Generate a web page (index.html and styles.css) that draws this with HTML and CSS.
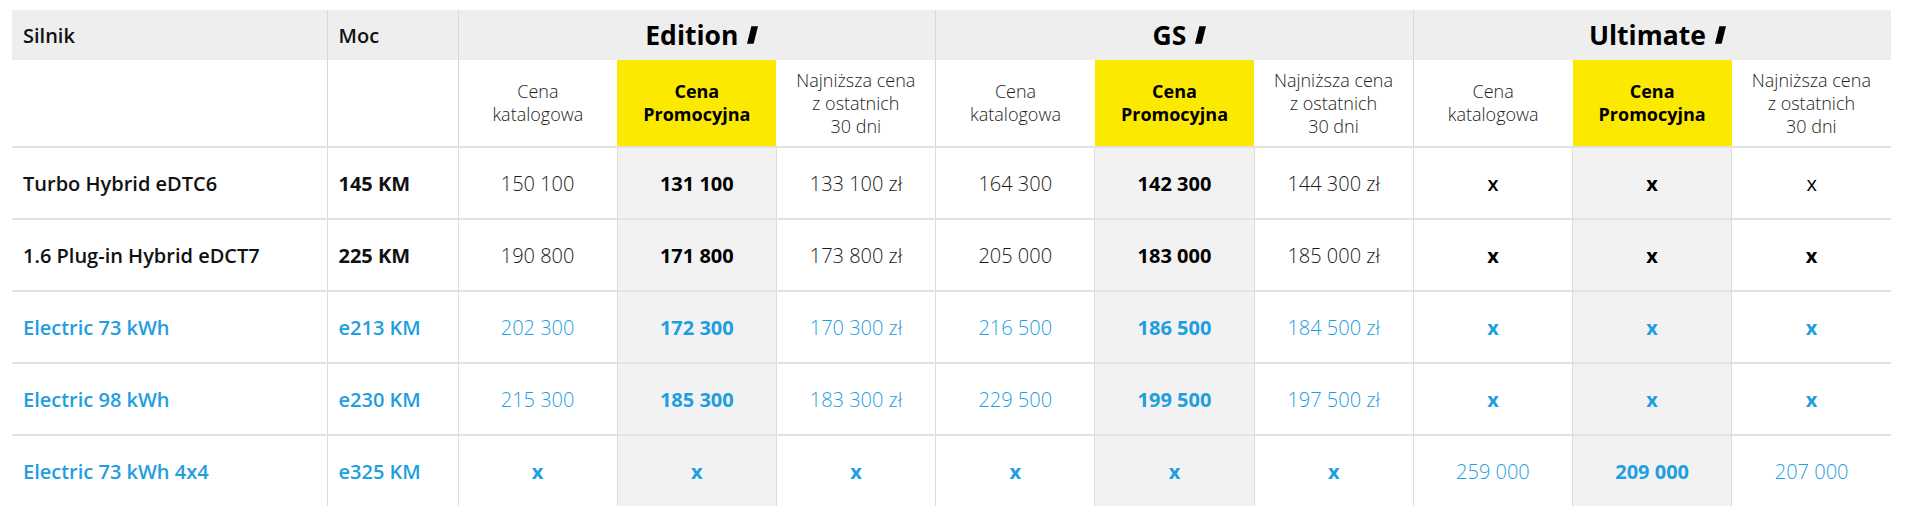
FILE: index.html
```html
<!DOCTYPE html>
<html lang="pl">
<head>
<meta charset="utf-8">
<title>Cennik</title>
<link rel="stylesheet" href="styles.css">
</head>
<body>
<table class="price-table">
  <colgroup>
    <col class="c-engine"><col class="c-power">
    <col><col><col><col><col><col><col><col><col>
  </colgroup>
  <thead>
    <tr class="head">
      <th class="lbl">Silnik</th>
      <th class="lbl">Moc</th>
      <th class="grp" colspan="3"><span class="grp-name">Edition<svg class="slash" viewBox="0 0 10 16"><polygon points="4,0 10,0 6,16 0,16"/></svg></span></th>
      <th class="grp" colspan="3"><span class="grp-name">GS<svg class="slash" viewBox="0 0 10 16"><polygon points="4,0 10,0 6,16 0,16"/></svg></span></th>
      <th class="grp" colspan="3"><span class="grp-name">Ultimate<svg class="slash" viewBox="0 0 10 16"><polygon points="4,0 10,0 6,16 0,16"/></svg></span></th>
    </tr>
    <tr class="sub">
      <th class="sep"></th>
      <th class="sep"></th>
      <th class="sep">Cena<br>katalogowa</th>
      <th class="promo">Cena<br>Promocyjna</th>
      <th>Najniższa cena<br>z ostatnich<br>30 dni</th>
      <th class="sep">Cena<br>katalogowa</th>
      <th class="promo">Cena<br>Promocyjna</th>
      <th>Najniższa cena<br>z ostatnich<br>30 dni</th>
      <th class="sep">Cena<br>katalogowa</th>
      <th class="promo">Cena<br>Promocyjna</th>
      <th>Najniższa cena<br>z ostatnich<br>30 dni</th>
    </tr>
  </thead>
  <tbody>
    <tr>
      <td class="name">Turbo Hybrid eDTC6</td>
      <td class="power">145 KM</td>
      <td>150 100</td><td class="pr">131 100</td><td>133 100 zł</td>
      <td>164 300</td><td class="pr">142 300</td><td>144 300 zł</td>
      <td class="x x-m">x</td><td class="pr x">x</td><td class="x x-r">x</td>
    </tr>
    <tr>
      <td class="name">1.6 Plug-in Hybrid eDCT7</td>
      <td class="power">225 KM</td>
      <td>190 800</td><td class="pr">171 800</td><td>173 800 zł</td>
      <td>205 000</td><td class="pr">183 000</td><td>185 000 zł</td>
      <td class="x">x</td><td class="pr x">x</td><td class="x">x</td>
    </tr>
    <tr class="ev">
      <td class="name">Electric 73 kWh</td>
      <td class="power">e213 KM</td>
      <td>202 300</td><td class="pr">172 300</td><td>170 300 zł</td>
      <td>216 500</td><td class="pr">186 500</td><td>184 500 zł</td>
      <td class="x">x</td><td class="pr x">x</td><td class="x">x</td>
    </tr>
    <tr class="ev">
      <td class="name">Electric 98 kWh</td>
      <td class="power">e230 KM</td>
      <td>215 300</td><td class="pr">185 300</td><td>183 300 zł</td>
      <td>229 500</td><td class="pr">199 500</td><td>197 500 zł</td>
      <td class="x">x</td><td class="pr x">x</td><td class="x">x</td>
    </tr>
    <tr class="ev">
      <td class="name">Electric 73 kWh 4x4</td>
      <td class="power">e325 KM</td>
      <td class="x">x</td><td class="pr x">x</td><td class="x">x</td>
      <td class="x">x</td><td class="pr x">x</td><td class="x">x</td>
      <td>259 000</td><td class="pr">209 000</td><td>207 000</td>
    </tr>
  </tbody>
</table>
</body>
</html>
```

FILE: styles.css
```css
html, body {
  margin: 0;
  padding: 0;
  background: #ffffff;
}

body {
  padding: 10px 16px 0 12px;
  font-family: "Open Sans", "Noto Sans", sans-serif;
  color: #111111;
}

.price-table {
  width: 1879px;
  border-collapse: collapse;
  table-layout: fixed;
}

.c-engine { width: 315px; }
.c-power { width: 131px; }

/* header row */
.head th {
  height: 50px;
  background: #eeeeee;
  padding: 0;
  border-left: 1px solid #d9d9d9;
}
.head th:first-child { border-left: none; }

.head .lbl {
  text-align: left;
  padding-left: 11px;
  font-size: 20px;
  font-weight: 600;
  color: #111;
}

.head .grp {
  text-align: center;
  font-size: 26.5px;
  font-weight: 700;
  color: #000;
}

.grp-name {
  display: inline-flex;
  align-items: center;
  gap: 9px;
  padding-left: 10px;
}

.slash {
  width: 11px;
  height: 18px;
  fill: #000;
}

/* sub header */
.sub th {
  height: 86px;
  padding: 0 2px;
  font-size: 18px;
  font-weight: 300;
  line-height: 23px;
  color: #222;
  text-align: center;
  vertical-align: middle;
  border-bottom: 2px solid #e2e2e2;
}
.sub th.sep { border-left: 1px solid #d9d9d9; }
.sub th:first-child { border-left: none; }

.sub th.promo {
  background: #fce900;
  font-weight: 700;
  color: #000;
}

/* body */
tbody td {
  height: 70px;
  padding: 0;
  text-align: center;
  vertical-align: middle;
  font-size: 20px;
  font-weight: 300;
  color: #1a1a1a;
  border-left: 1px solid #dcdcdc;
  border-top: 2px solid #e2e2e2;
}
tbody tr:first-child td { border-top: none; }
tbody td:first-child { border-left: none; }

tbody td.name {
  text-align: left;
  padding-left: 11px;
  font-weight: 550;
  color: #111;
}

tbody td.power {
  text-align: left;
  padding-left: 11px;
  font-weight: 700;
  color: #111;
}

tbody td.pr {
  background: #f2f2f2;
  font-weight: 700;
  color: #000;
}

tbody td.x {
  font-weight: 700;
  color: #000;
}
tbody td.x-m { font-weight: 600; }
tbody td.x-r { font-weight: 500; }

/* electric rows */
tbody tr.ev td,
tbody tr.ev td.name,
tbody tr.ev td.power,
tbody tr.ev td.pr,
tbody tr.ev td.x {
  color: #1f9ee0;
}
tbody tr.ev td.power { font-weight: 600; }
```
